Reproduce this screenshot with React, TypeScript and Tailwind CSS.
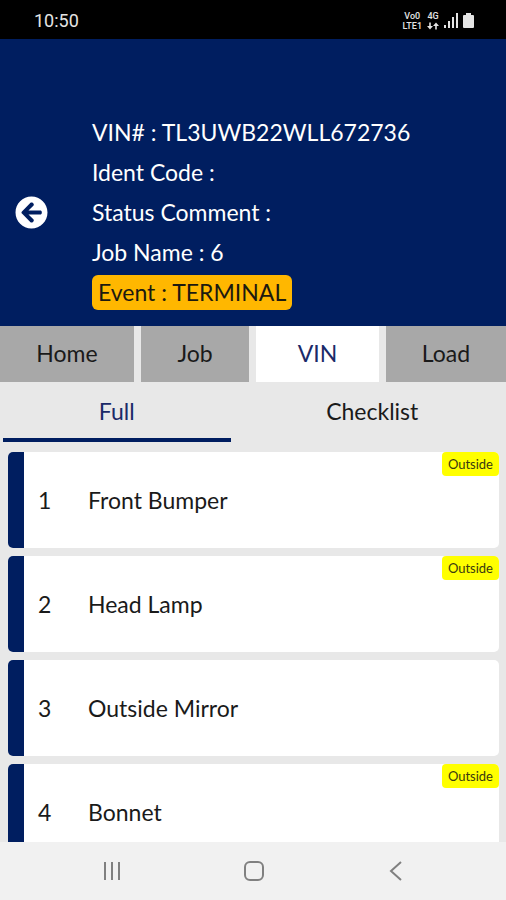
import React from "react";
import { FaArrowCircleLeft } from "react-icons/fa";

type Part = { id: number; name: string; outside: boolean };

const parts: Part[] = [
  { id: 1, name: "Front Bumper", outside: true },
  { id: 2, name: "Head Lamp", outside: true },
  { id: 3, name: "Outside Mirror", outside: false },
  { id: 4, name: "Bonnet", outside: true },
];

const tabs = ["Home", "Job", "VIN", "Load"];

function StatusBar() {
  return (
    <div className="flex h-[39px] shrink-0 items-center justify-between bg-black pt-[2px] pr-8 pl-[34px] font-['Roboto',sans-serif] text-[#e4e4e4]">
      <span className="text-lg">10:50</span>
      <div className="flex items-center gap-[5px]">
        <div className="flex flex-col items-center text-[9px] leading-[10px] font-medium">
          <span>Vo0</span>
          <span>LTE1</span>
        </div>
        <div className="flex flex-col items-center text-[9px] leading-[10px] font-medium">
          <span>4G</span>
          <svg width="12" height="10" viewBox="0 0 12 8" fill="currentColor" aria-hidden="true">
            <path d="M2.2 0.500h1.6v3.500H6L3 7.500 0 4h2.2zM8.2 7.500h1.6V4H12L9 .5 6 4h2.2z" />
          </svg>
        </div>
        <svg width="14" height="15" viewBox="0 0 14 15" fill="currentColor" aria-hidden="true">
          <rect x="0" y="12" width="2" height="3" />
          <rect x="4" y="8" width="2" height="7" />
          <rect x="8" y="4" width="2" height="11" />
          <rect x="12" y="0" width="2" height="15" />
        </svg>
        <svg width="11" height="15" viewBox="0 0 11 15" fill="currentColor" aria-hidden="true">
          <path d="M3 0h5v2h2a1 1 0 0 1 1 1v11a1 1 0 0 1-1 1H1a1 1 0 0 1-1-1V3a1 1 0 0 1 1-1h2z" />
        </svg>
      </div>
    </div>
  );
}

function Header() {
  return (
    <header className="flex shrink-0 items-center bg-[#001e60] pt-[76px] pb-4 pl-[15px] text-[23px] text-white">
      <button type="button" aria-label="Back" className="mr-11 shrink-0">
        <FaArrowCircleLeft size={33} aria-hidden="true" />
      </button>
      <div className="flex flex-col items-start gap-[5px]">
        <p className="leading-[35px]">VIN# : TL3UWB22WLL672736</p>
        <p className="leading-[35px]">Ident Code :</p>
        <p className="leading-[35px]">Status Comment :</p>
        <p className="leading-[35px]">Job Name : 6</p>
        <p className="rounded-md bg-[#ffb700] px-[6px] leading-[35px] text-[#1c1a10]">
          Event : TERMINAL
        </p>
      </div>
    </header>
  );
}

function PartCard({ part }: { part: Part }) {
  return (
    <li className="relative flex h-24 shrink-0 items-center overflow-hidden rounded-[5px] bg-white text-[23px] text-[#1a1a1a]">
      <span className="w-4 shrink-0 self-stretch bg-[#001e60]" />
      <span className="w-16 shrink-0 pl-[14px]">{part.id}</span>
      <span>{part.name}</span>
      {part.outside && (
        <span className="absolute top-0 right-0 rounded-[4px] bg-[#ffff00] px-[6px] text-[13px] leading-6 text-[#3a3a10]">
          Outside
        </span>
      )}
    </li>
  );
}

export default function App() {
  return (
    <div className="flex h-screen flex-col bg-[#e8e8e8] font-['Lato',sans-serif]">
      <StatusBar />
      <Header />
      <nav className="grid shrink-0 grid-cols-[134fr_108fr_123fr_120fr] gap-[7px] text-[23px]">
        {tabs.map((tab) => (
          <button
            key={tab}
            type="button"
            className={
              tab === "VIN"
                ? "h-14 bg-white pb-[2px] text-[#1b2a68]"
                : "h-14 bg-[#a8a8a8] pb-[2px] text-[#1a1a1a]"
            }
          >
            {tab}
          </button>
        ))}
      </nav>
      <div className="grid shrink-0 grid-cols-2 gap-7 pr-5 pl-[3px] text-[23px]">
        <button type="button" className="h-[60px] border-b-4 border-[#001e60] pt-[2px] text-[#1b2a68]">
          Full
        </button>
        <button type="button" className="h-[60px] border-b-4 border-transparent pt-[2px] text-[#1a1a1a]">
          Checklist
        </button>
      </div>
      <ul className="flex min-h-0 flex-1 flex-col gap-2 overflow-hidden pt-[10px] pr-[7px] pl-2">
        {parts.map((part) => (
          <PartCard key={part.id} part={part} />
        ))}
      </ul>
      <footer className="flex h-[58px] shrink-0 items-center justify-around bg-[#f1f1f1] pr-10 pl-[42px] text-[#808080]">
        <button type="button" aria-label="Recent apps">
          <svg width="20" height="20" viewBox="0 0 20 20" fill="none" stroke="currentColor" strokeWidth="2" aria-hidden="true">
            <path d="M2 1v18M9 1v18M16 1v18" />
          </svg>
        </button>
        <button type="button" aria-label="Home screen">
          <svg width="20" height="20" viewBox="0 0 20 20" fill="none" stroke="currentColor" strokeWidth="2" aria-hidden="true">
            <rect x="1" y="1" width="18" height="18" rx="5" />
          </svg>
        </button>
        <button type="button" aria-label="Go back">
          <svg width="20" height="20" viewBox="0 0 20 20" fill="none" stroke="currentColor" strokeWidth="2" aria-hidden="true">
            <path d="M16 1 6 10l10 9" />
          </svg>
        </button>
      </footer>
    </div>
  );
}
